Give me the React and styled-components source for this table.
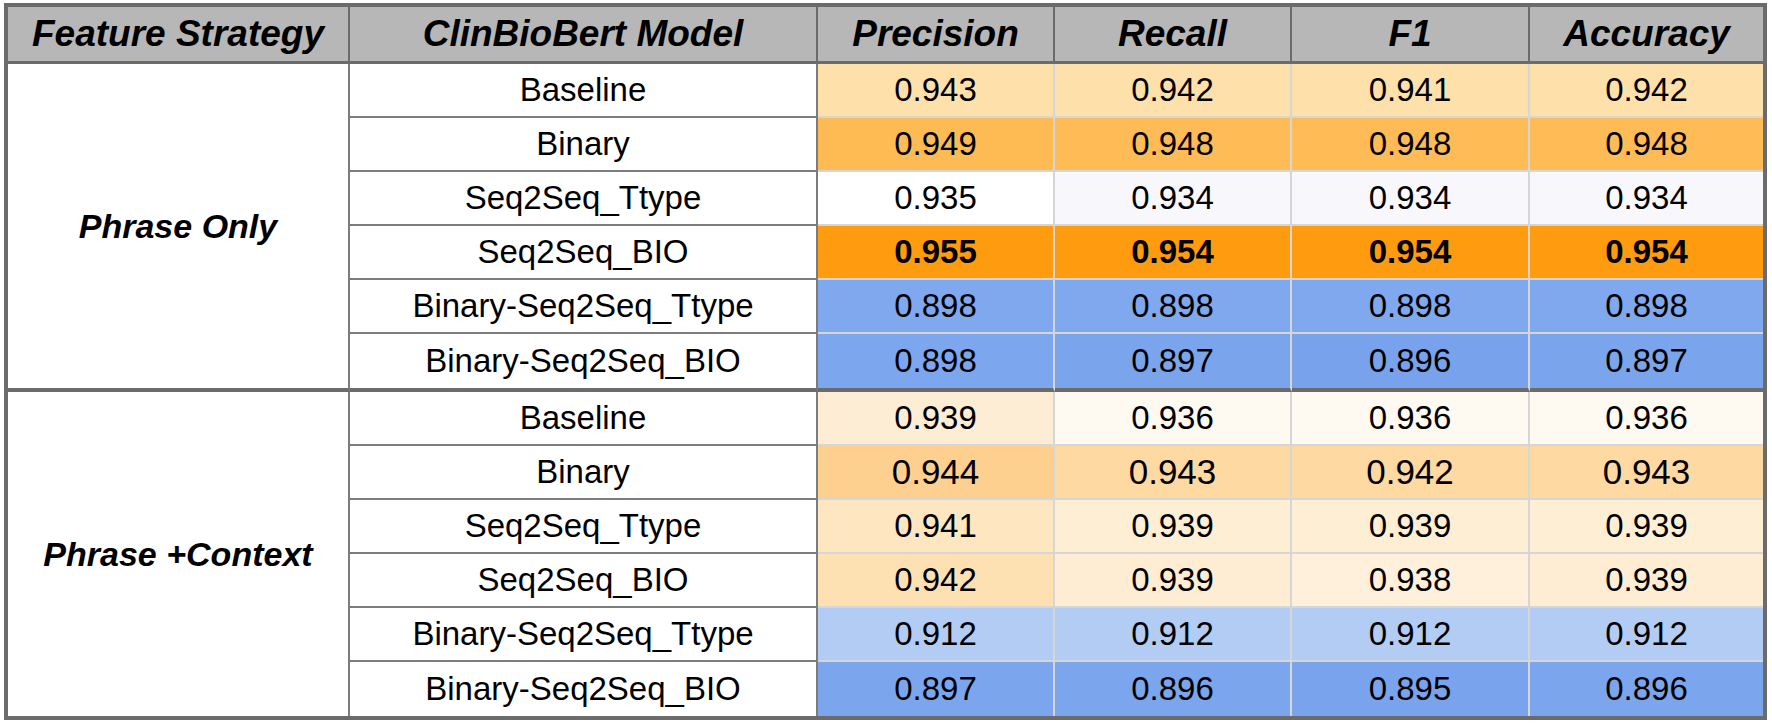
import React from "react";
import styled, { createGlobalStyle } from "styled-components";

const GlobalStyle = createGlobalStyle`
  html, body {
    margin: 0;
    padding: 0;
    background: #ffffff;
  }
  body {
    font-family: "Liberation Sans", Arial, sans-serif;
    color: #000;
  }
`;

const DARK = "#6b6b6b";
const MID = "#7c7c7c";
const LIGHT = "#d6d6d6";

const columns = ["Feature Strategy", "ClinBioBert Model", "Precision", "Recall", "F1", "Accuracy"];

// each row: model name, values, background per value
const groups = [
  {
    label: "Phrase Only",
    rows: [
      { model: "Baseline", values: ["0.943", "0.942", "0.941", "0.942"], bg: ["#fee0ab", "#fee0ab", "#fee0ab", "#fee0ab"] },
      { model: "Binary", values: ["0.949", "0.948", "0.948", "0.948"], bg: ["#ffbb53", "#ffbc56", "#ffbc56", "#ffbc56"] },
      { model: "Seq2Seq_Ttype", values: ["0.935", "0.934", "0.934", "0.934"], bg: ["#ffffff", "#f8f8fc", "#f8f8fc", "#f8f8fc"] },
      { model: "Seq2Seq_BIO", values: ["0.955", "0.954", "0.954", "0.954"], bg: ["#fe9b0e", "#fe9b0e", "#fe9b0e", "#fe9b0e"], bold: true },
      { model: "Binary-Seq2Seq_Ttype", values: ["0.898", "0.898", "0.898", "0.898"], bg: ["#7fa8ee", "#7fa8ee", "#7fa8ee", "#7fa8ee"] },
      { model: "Binary-Seq2Seq_BIO", values: ["0.898", "0.897", "0.896", "0.897"], bg: ["#7ca6ed", "#7aa5ec", "#78a3ec", "#7aa5ec"] },
    ],
  },
  {
    label: "Phrase +Context",
    rows: [
      { model: "Baseline", values: ["0.939", "0.936", "0.936", "0.936"], bg: ["#feedd5", "#fef9f1", "#fef9f1", "#fef9f1"] },
      { model: "Binary", values: ["0.944", "0.943", "0.942", "0.943"], bg: ["#fed090", "#fed9a1", "#fed9a1", "#fed9a1"], large: true },
      { model: "Seq2Seq_Ttype", values: ["0.941", "0.939", "0.939", "0.939"], bg: ["#fee6c1", "#feeed4", "#feeed4", "#feeed4"] },
      { model: "Seq2Seq_BIO", values: ["0.942", "0.939", "0.938", "0.939"], bg: ["#fee1b3", "#feedd3", "#fef0da", "#feedd3"] },
      { model: "Binary-Seq2Seq_Ttype", values: ["0.912", "0.912", "0.912", "0.912"], bg: ["#b2ccf4", "#b2ccf4", "#b2ccf4", "#b2ccf4"] },
      { model: "Binary-Seq2Seq_BIO", values: ["0.897", "0.896", "0.895", "0.896"], bg: ["#7ba5ec", "#7ba5ec", "#79a3ec", "#7ba5ec"] },
    ],
  },
];

const Frame = styled.div`
  box-sizing: border-box;
  margin: 3px 0 0 4px;
  width: 1763px;
  border: 4px solid ${DARK};
  display: grid;
  grid-template-columns: 342px 468px 237px 237px 238px 1fr;
`;

const HeadCell = styled.div`
  box-sizing: border-box;
  height: 57px;
  background: #b7b7b7;
  border-bottom: 3px solid ${DARK};
  border-right: ${(p) => (p.$last ? "none" : `2px solid ${DARK}`)};
  display: flex;
  align-items: center;
  justify-content: center;
  font-size: 37px;
  font-weight: 700;
  font-style: italic;
  white-space: nowrap;
`;

const GroupCell = styled.div`
  box-sizing: border-box;
  grid-row: span 6;
  border-right: 2px solid ${MID};
  border-bottom: ${(p) => (p.$last ? "none" : `4px solid ${DARK}`)};
  display: flex;
  align-items: center;
  justify-content: center;
  font-size: 34px;
  font-weight: 700;
  font-style: italic;
`;

const ModelCell = styled.div`
  box-sizing: border-box;
  height: ${(p) => (p.$sep ? 58 : 54)}px;
  border-right: 2px solid ${MID};
  border-bottom: ${(p) => (p.$sep ? `4px solid ${DARK}` : p.$end ? "none" : `2px solid ${MID}`)};
  display: flex;
  align-items: center;
  justify-content: center;
  font-size: 33px;
  white-space: nowrap;
`;

const ValueCell = styled.div`
  box-sizing: border-box;
  height: ${(p) => (p.$sep ? 58 : 54)}px;
  background: ${(p) => p.$bg};
  border-right: ${(p) => (p.$last ? "none" : `2px solid ${LIGHT}`)};
  border-bottom: ${(p) => (p.$sep ? `4px solid ${DARK}` : p.$end ? "none" : `2px solid ${LIGHT}`)};
  display: flex;
  align-items: center;
  justify-content: center;
  font-size: ${(p) => (p.$large ? 35 : 33)}px;
  font-weight: ${(p) => (p.$bold ? 700 : 400)};
`;

export default function App() {
  return (
    <>
      <GlobalStyle />
      <Frame>
        {columns.map((c, i) => (
          <HeadCell key={c} $last={i === columns.length - 1}>
            {c}
          </HeadCell>
        ))}
        {groups.map((g, gi) => {
          const lastGroup = gi === groups.length - 1;
          return g.rows.map((r, ri) => {
            const lastRow = ri === g.rows.length - 1;
            const sep = lastRow && !lastGroup;
            const end = lastRow && lastGroup;
            return (
              <React.Fragment key={`${gi}-${ri}`}>
                {ri === 0 && <GroupCell $last={lastGroup}>{g.label}</GroupCell>}
                <ModelCell $sep={sep} $end={end}>
                  {r.model}
                </ModelCell>
                {r.values.map((v, vi) => (
                  <ValueCell
                    key={vi}
                    $bg={r.bg[vi]}
                    $bold={r.bold}
                    $large={r.large}
                    $sep={sep}
                    $end={end}
                    $last={vi === r.values.length - 1}
                  >
                    {v}
                  </ValueCell>
                ))}
              </React.Fragment>
            );
          });
        })}
      </Frame>
    </>
  );
}
